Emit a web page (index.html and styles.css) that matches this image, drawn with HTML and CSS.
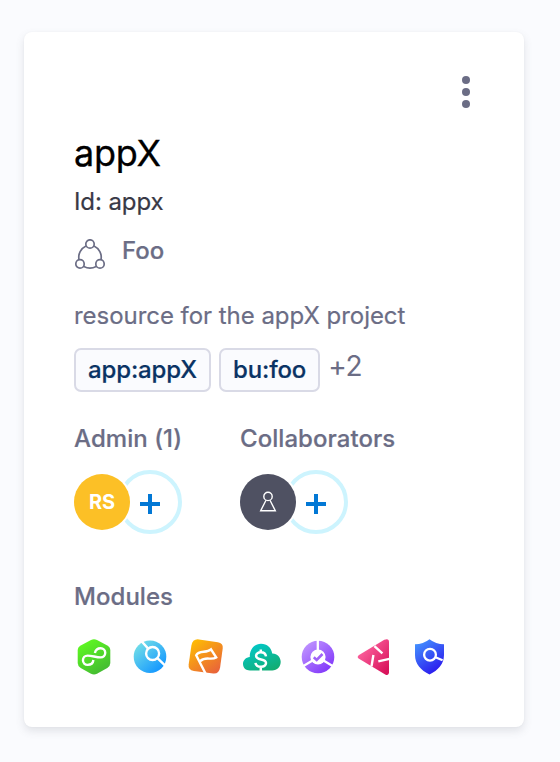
FILE: index.html
```html
<!DOCTYPE html>
<html lang="en">
<head>
<meta charset="utf-8">
<title>appX</title>
<link rel="stylesheet" href="styles.css">
</head>
<body>
<article class="card">
  <button class="menu" aria-label="Options"><i></i><i></i><i></i></button>
  <h1 class="title">appX</h1>
  <p class="ident">Id: appx</p>
  <div class="org">
    <svg class="org-icon" viewBox="0 0 32 32" fill="none" stroke="#6b6d85" stroke-width="1.7">
      <circle cx="16" cy="5" r="4.2"/><circle cx="6" cy="24.9" r="4.2"/><circle cx="26" cy="24.9" r="4.2"/>
      <path d="M12 7A12.5 12.5 0 0 0 5 20.7M20 7A12.5 12.5 0 0 1 27 20.7M9.8 27.6Q16 30.8 22.2 27.6"/>
    </svg>
    <span class="org-name">Foo</span>
  </div>
  <p class="description">resource for the appX project</p>
  <div class="tags">
    <span class="tag">app:appX</span><span class="tag">bu:foo</span><span class="more">+2</span>
  </div>
  <div class="people">
    <section class="admin">
      <h2 class="label">Admin (1)</h2>
      <div class="avatars"><span class="avatar avatar-admin">RS</span><button class="add" aria-label="Add admin"></button></div>
    </section>
    <section>
      <h2 class="label">Collaborators</h2>
      <div class="avatars">
        <span class="avatar avatar-empty">
          <svg class="pawn" viewBox="0 0 20 24" fill="none" stroke="#fff" stroke-width="1.4"><circle cx="10" cy="6.4" r="4.2"/><path d="M8 10.2 2.7 20.7H17.3L12 10.2"/></svg>
        </span><button class="add" aria-label="Add collaborator"></button>
      </div>
    </section>
  </div>
  <h2 class="label">Modules</h2>
  <div class="modules">
    <svg viewBox="0 0 40 40" fill="none">
      <defs><linearGradient id="green" x1=".2" y1="0" x2=".8" y2="1"><stop stop-color="#5ffb20"/><stop offset="1" stop-color="#42b634"/></linearGradient></defs>
      <path fill="url(#green)" d="M17 3Q20 1.6 23 3L33.3 8.5Q36.3 10.2 36.3 13.4V26Q36.3 29.2 33.3 31L23 36.8Q20 38.4 17 36.8L6.7 31Q3.7 29.2 3.7 26V13.4Q3.7 10.2 6.7 8.5Z"/>
      <path stroke="#fff" stroke-width="2.4" d="M20.9 16C21.6 12.8 23.8 11.3 26.7 11.3A4.5 4.5 0 0 1 26.7 20.4C22.2 20.4 18 18.6 13.6 18.6A4.6 4.6 0 0 0 13.6 27.9C16.7 27.9 19 26.3 19.4 23"/>
    </svg>
    <svg viewBox="0 0 40 40" fill="none">
      <defs><linearGradient id="blue" x1=".1" y1=".1" x2=".8" y2=".9"><stop stop-color="#73dfe7"/><stop offset="1" stop-color="#1598ff"/></linearGradient></defs>
      <circle cx="20" cy="19.8" r="16.3" fill="url(#blue)"/>
      <g stroke="#fff" stroke-width="2.4"><circle cx="22.6" cy="16.5" r="6.5"/><path d="M11.3 4 18.2 11.6M27.4 21.2 36 29.3"/></g>
    </svg>
    <svg viewBox="0 0 40 40" fill="none">
      <defs><linearGradient id="orange" x1=".1" y1="0" x2=".85" y2="1"><stop stop-color="#ffc000"/><stop offset="1" stop-color="#e8603c"/></linearGradient></defs>
      <path fill="url(#orange)" d="M13 2.4 31.8 5.3Q37.4 6.2 36.7 11.5L34.1 30.5Q33 37 27.3 36.5L7.8 34Q1.9 33 2.7 27.3L5.4 8.5Q6.6 1.6 13 2.4Z"/>
      <path stroke="#fff" stroke-width="2.4" d="M20 37.5 10.2 18.2C13 12.8 20.5 16.5 25 12.3L30.2 20.4C25 23.8 20 18.8 14.3 24"/>
    </svg>
    <svg viewBox="0 0 40 40" fill="none">
      <defs><linearGradient id="teal" x1=".2" y1="0" x2=".8" y2="1"><stop stop-color="#01c9cc"/><stop offset="1" stop-color="#12ac70"/></linearGradient></defs>
      <path fill="url(#teal)" d="M8 33.5C3.8 33.5 1 30.7 1 27C1 23.2 4 20.4 7.8 20.1C7.5 12.4 12.4 6.8 19 6.8C25.2 6.8 29.3 10.8 30.2 16.4C35.2 16.2 38.7 20.2 38.7 24.8C38.7 29.8 35.2 33.5 30.2 33.5Z"/>
      <path stroke="#fff" stroke-width="2.5" d="M18.8 12.4V16M18.8 29.5V34M24 19.4C23.2 13.9 14.1 14.2 14.1 18.8C14.1 23.9 24 21.2 24 26C24 31.2 14.2 31 13.5 25.8"/>
    </svg>
    <svg viewBox="0 0 40 40" fill="none">
      <defs><linearGradient id="purple" x1=".15" y1=".1" x2=".85" y2=".9"><stop stop-color="#bd91ff"/><stop offset="1" stop-color="#8238fa"/></linearGradient></defs>
      <circle cx="20" cy="20" r="16.3" fill="url(#purple)"/>
      <circle cx="20" cy="20" r="7.6" fill="#fff"/>
      <path stroke="#fff" stroke-width="2.3" d="M19.8 3V14M14.5 23.4 5 29.2M25.5 23.4 35 29.2"/>
      <path stroke="#a063f7" stroke-width="2.6" d="m15.8 20.2 2.9 2.8 5.8-6"/>
    </svg>
    <svg viewBox="0 0 40 40" fill="none">
      <defs><linearGradient id="pink" x1=".2" y1=".2" x2=".9" y2=".9"><stop stop-color="#fb609c"/><stop offset="1" stop-color="#d9145c"/></linearGradient></defs>
      <path fill="url(#pink)" d="M5 18 30.3 2.8Q35 .8 35 5V35.3Q35 39.6 30.8 37.2L5 21.8Q2.4 20 5 18Z"/>
      <path stroke="#fff" stroke-width="2.4" d="m20.4 9.2 8 7.1M19.4 18 17.5 29.4M24.3 24.4 35.4 21.8"/>
    </svg>
    <svg viewBox="0 0 40 40" fill="none">
      <defs><linearGradient id="indigo" x1=".1" y1="0" x2=".7" y2="1"><stop stop-color="#4598ff"/><stop offset="1" stop-color="#2a16ed"/></linearGradient></defs>
      <path fill="url(#indigo)" d="M19.5 2.3Q25.8 7.3 34 7.3V18C34 26.8 28.2 33.5 19.5 37.4C10.8 33.5 5 26.8 5 18V7.3Q13.2 7.3 19.5 2.3Z"/>
      <g stroke="#fff" stroke-width="2.3"><circle cx="20" cy="17.7" r="5.9"/><path d="m25.4 20.2 7.2 3"/></g>
    </svg>
  </div>
</article>
</body>
</html>
```
FILE: styles.css
```css
* { box-sizing: border-box; }
body { margin: 0; padding: 32px 36px 35px 24px; background: #fafbfe; font-family: Inter, sans-serif; color: #6b6d85; }
h1, h2, p { margin: 0; }
button { padding: 0; border: 0; background: none; }
.card { display: flex; flex-direction: column; width: 500px; height: 695px; padding: 44px 50px 0; border-radius: 8px; background: #fff; box-shadow: 0 4px 8px rgba(96, 97, 112, .16), 0 0 2px rgba(40, 41, 61, .04); }
.menu { display: flex; flex-direction: column; gap: 4px; align-self: flex-end; width: 8px; margin-right: 4px; }
.menu i { width: 8px; height: 8px; border-radius: 50%; background: #6b6d85; }
.title { margin-top: 23px; font-size: 36px; font-weight: 400; line-height: 44px; letter-spacing: -.3px; color: #000; -webkit-text-stroke: .3px; }
.ident { margin-top: 11px; font-size: 24px; line-height: 32px; letter-spacing: -.1px; color: #383946; -webkit-text-stroke: .2px; }
.org { display: flex; gap: 16px; align-items: flex-start; margin-top: 17px; height: 40px; }
.org-icon { width: 32px; height: 32px; margin-top: 4px; }
.org-name { font-size: 24px; font-weight: 500; line-height: 32px; -webkit-text-stroke: .2px; }
.description { margin-top: 25px; font-size: 24px; line-height: 32px; letter-spacing: -.04px; -webkit-text-stroke: .2px; }
.tags { display: flex; gap: 8px; height: 44px; margin-top: 16px; }
.tag { padding: 0 12px; border: 2px solid #d9dae6; border-radius: 7px; background: #fafbfe; color: #0a3364; font-size: 24px; font-weight: 500; line-height: 39px; letter-spacing: -.13px; -webkit-text-stroke: .2px; }
.more { font-size: 28px; line-height: 36px; letter-spacing: -.2px; }
.people { display: flex; margin-top: 31px; height: 158px; }
.admin { width: 166px; }
.label { font-size: 24px; font-weight: 500; line-height: 32px; letter-spacing: .05px; -webkit-text-stroke: .2px; }
.avatars { display: flex; align-items: center; margin-top: 15px; }
.avatar { display: flex; align-items: center; justify-content: center; width: 56px; height: 56px; border-radius: 50%; color: #fff; font-size: 20px; font-weight: 700; box-shadow: 0 0 0 2px #fff; z-index: 1; }
.avatar-admin { background: #fcc026; }
.avatar-empty { background: #4f5162; }
.pawn { width: 20px; height: 24px; }
.add { width: 64px; height: 64px; margin-left: -12px; border: 4px solid #cdf4fe; border-radius: 50%; background: linear-gradient(#0278d5, #0278d5) 18px 28px / 20px 4px no-repeat, linear-gradient(#0278d5, #0278d5) 26px 20px / 4px 20px no-repeat; }
.modules { display: flex; gap: 16px; margin-top: 24px; }
.modules svg { width: 40px; height: 40px; }
```
